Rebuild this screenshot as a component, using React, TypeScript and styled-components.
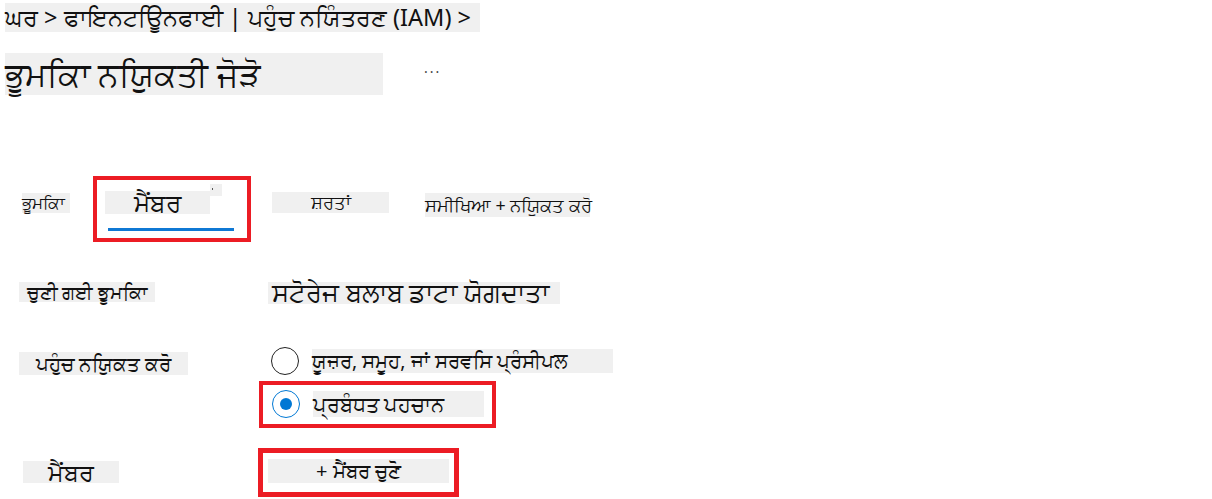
import React from "react";
import styled, { createGlobalStyle } from "styled-components";

const GlobalStyle = createGlobalStyle`
  body {
    margin: 0;
    background: #ffffff;
    font-family: "Noto Sans", "DejaVu Sans", sans-serif;
    color: #111111;
  }
`;

const Page = styled.div`
  width: 1212px;
  height: 499px;
  display: flex;
  flex-direction: column;
  overflow: hidden;
`;

const Shade = styled.div<{ w: number; h: number; size: number; align?: string }>`
  width: ${(p) => p.w}px;
  height: ${(p) => p.h}px;
  background: #f0f0f0;
  font-size: ${(p) => p.size}px;
  line-height: ${(p) => p.h}px;
  text-align: ${(p) => p.align || "left"};
  white-space: nowrap;
  flex-shrink: 0;
`;

const Breadcrumb = styled(Shade)`
  margin: 3px 0 0 5px;
`;

const TitleRow = styled.div`
  display: flex;
  align-items: center;
  margin: 21px 0 0 5px;
`;

const Ellipsis = styled.div`
  margin-left: 41px;
  font-size: 14px;
  letter-spacing: 2px;
  color: #444;
  line-height: 14px;
  margin-top: -12px;
`;

const TabsRow = styled.div`
  display: flex;
  align-items: flex-start;
  margin-top: 81px;
  padding-left: 22px;
  height: 66px;
`;

const TabLabel = styled(Shade)<{ left: number; top: number }>`
  margin-left: ${(p) => p.left}px;
  margin-top: ${(p) => p.top}px;
`;

const Highlight = styled.div<{ left: number; w: number; h: number; border: number; pad: string }>`
  margin-left: ${(p) => p.left}px;
  width: ${(p) => p.w}px;
  height: ${(p) => p.h}px;
  border: ${(p) => p.border}px solid #ec1c24;
  box-sizing: border-box;
  padding: ${(p) => p.pad};
  flex-shrink: 0;
`;

const ActiveTabHead = styled.div`
  display: flex;
  align-items: flex-start;
`;

const ActiveTab = styled(Shade)`
  margin-top: 7px;
`;

const Marker = styled.div`
  width: 12px;
  height: 12px;
  background: #f0f0f0;
  position: relative;
  &::after {
    content: "";
    position: absolute;
    left: 2px;
    top: 4px;
    width: 1px;
    height: 2px;
    background: #555;
  }
`;

const Underline = styled.div`
  width: 126px;
  height: 3px;
  background: #0f78d4;
  margin: 14px 0 0 3px;
`;

const Form = styled.div`
  display: grid;
  grid-template-columns: 239px auto;
  padding-left: 19px;
  align-items: start;
`;

const FieldLabel = styled(Shade)<{ left?: number; top?: number }>`
  margin-left: ${(p) => p.left || 0}px;
  margin-top: ${(p) => p.top || 0}px;
`;

const FieldValue = styled.div<{ top: number }>`
  margin-top: ${(p) => p.top}px;
  display: flex;
  flex-direction: column;
  align-items: flex-start;
`;

const RoleName = styled(Shade)`
  margin-left: 10px;
  padding-left: 4px;
  box-sizing: border-box;
`;

const Option = styled.div<{ left: number }>`
  display: flex;
  align-items: center;
  margin-left: ${(p) => p.left}px;
`;

const Radio = styled.div<{ checked?: boolean }>`
  width: 28px;
  height: 28px;
  border-radius: 50%;
  box-sizing: border-box;
  border: 1px solid ${(p) => (p.checked ? "#0078d4" : "#222")};
  display: flex;
  align-items: center;
  justify-content: center;
  flex-shrink: 0;
  &::after {
    content: "";
    width: 12px;
    height: 12px;
    border-radius: 50%;
    background: ${(p) => (p.checked ? "#0078d4" : "transparent")};
  }
`;

const OptionText = styled(Shade)`
  margin-left: 13px;
`;

export default function App() {
  return (
    <>
      <GlobalStyle />
      <Page>
        <Breadcrumb w={475} h={29} size={23.5}>
          ਘਰ &gt; ਫਾਇਨਟਊਿਨਫਾਈ | ਪਹੁੰਚ ਨਯਿੰਤਰਣ (IAM) &gt;
        </Breadcrumb>
        <TitleRow>
          <Shade w={378} h={42} size={32.5}>
            ਭੂਮਕਿਾ ਨਯਿੁਕਤੀ ਜੋੜੋ
          </Shade>
          <Ellipsis>...</Ellipsis>
        </TitleRow>

        <TabsRow>
          <TabLabel w={48} h={20} size={17} left={0} top={17}>
            ਭੂਮਕਿਾ
          </TabLabel>
          <Highlight left={23} w={158} h={66} border={4} pad="4px 0 0 8px">
            <ActiveTabHead>
              <ActiveTab w={105} h={23} size={25} align="center">
                ਮੈਂਬਰ
              </ActiveTab>
              <Marker />
            </ActiveTabHead>
            <Underline />
          </Highlight>
          <TabLabel w={117} h={21} size={18} left={21} top={16} align="center">
            ਸ਼ਰਤਾਂ
          </TabLabel>
          <TabLabel w={165} h={24} size={17.8} left={36} top={17}>
            ਸਮੀਖਿਆ + ਨਯਿੁਕਤ ਕਰੋ
          </TabLabel>
        </TabsRow>

        <Form>
          <FieldLabel w={136} h={20} size={18.5} top={40} align="center">
            ਚੁਣੀ ਗਈ ਭੂਮਕਿਾ
          </FieldLabel>
          <FieldValue top={40}>
            <RoleName w={292} h={22} size={25.6}>
              ਸਟੋਰੇਜ ਬਲਾਬ ਡਾਟਾ ਯੋਗਦਾਤਾ
            </RoleName>
          </FieldValue>

          <FieldLabel w={169} h={23} size={20} top={48} align="center">
            ਪਹੁੰਚ ਨਯਿੁਕਤ ਕਰੋ
          </FieldLabel>
          <FieldValue top={43}>
            <Option left={13}>
              <Radio />
              <OptionText w={301} h={24} size={19.5}>
                ਯੂਜ਼ਰ, ਸਮੂਹ, ਜਾਂ ਸਰਵਸਿ ਪ੍ਰੰਸੀਪਲ
              </OptionText>
            </Option>
            <Highlight left={1} w={237} h={47} border={4} pad="5px 0 0 9px" style={{ marginTop: 6 }}>
              <Option left={0}>
                <Radio checked />
                <OptionText w={171} h={26} size={21}>
                  ਪ੍ਰਬੰਧਤ ਪਹਚਾਨ
                </OptionText>
              </Option>
            </Highlight>
          </FieldValue>

          <FieldLabel w={96} h={22} size={24} left={4} top={33} align="center">
            ਮੈਂਬਰ
          </FieldLabel>
          <FieldValue top={20}>
            <Highlight left={0} w={201} h={49} border={5} pad="6px 0 0 5px">
              <Shade w={181} h={24} size={20} align="center">
                + ਮੈਂਬਰ ਚੁਣੋ
              </Shade>
            </Highlight>
          </FieldValue>
        </Form>
      </Page>
    </>
  );
}
